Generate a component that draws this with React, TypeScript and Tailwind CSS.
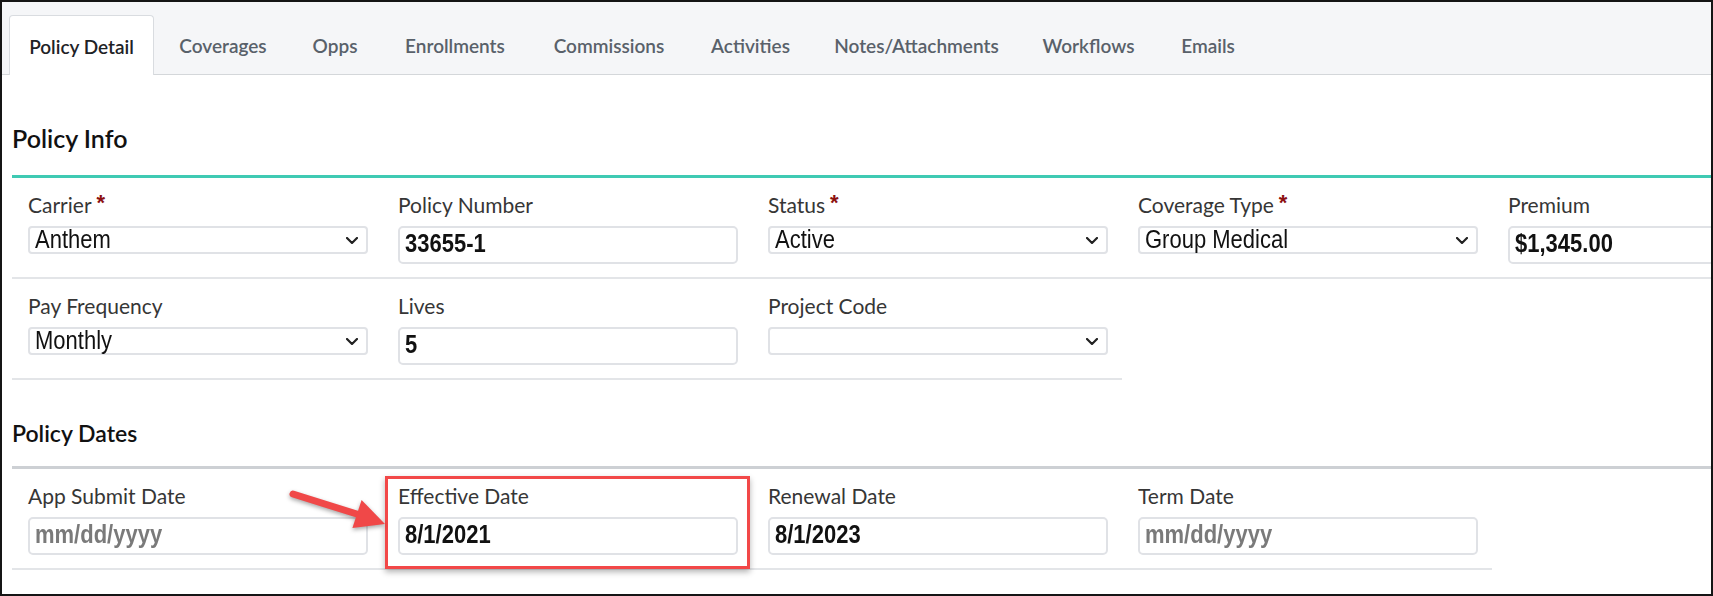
import React from "react";

type Tab = { label: string; cls: string; active?: boolean };

const tabs: Tab[] = [
  { label: "Policy Detail", cls: "w-[145px]", active: true },
  { label: "Coverages", cls: "w-[128px]" },
  { label: "Opps", cls: "w-[86px]" },
  { label: "Enrollments", cls: "w-[144px]" },
  { label: "Commissions", cls: "w-[154px]" },
  { label: "Activities", cls: "w-[119px]" },
  { label: "Notes/Attachments", cls: "w-[203px]" },
  { label: "Workflows", cls: "w-[131px]" },
  { label: "Emails", cls: "w-[98px]" },
];

type F = {
  label: string;
  req?: boolean;
  kind: "select" | "input";
  value?: string;
  placeholder?: string;
};

const row1: F[] = [
  { label: "Carrier", req: true, kind: "select", value: "Anthem" },
  { label: "Policy Number", kind: "input", value: "33655-1" },
  { label: "Status", req: true, kind: "select", value: "Active" },
  { label: "Coverage Type", req: true, kind: "select", value: "Group Medical" },
  { label: "Premium", kind: "input", value: "$1,345.00" },
];

const row2: F[] = [
  { label: "Pay Frequency", kind: "select", value: "Monthly" },
  { label: "Lives", kind: "input", value: "5" },
  { label: "Project Code", kind: "select", value: "" },
];

const row3: F[] = [
  { label: "App Submit Date", kind: "input", placeholder: "mm/dd/yyyy" },
  { label: "Effective Date", kind: "input", value: "8/1/2021" },
  { label: "Renewal Date", kind: "input", value: "8/1/2023" },
  { label: "Term Date", kind: "input", placeholder: "mm/dd/yyyy" },
];

function Chevron() {
  return (
    <svg viewBox="0 0 12 7" className="w-[12px] h-[7px] shrink-0" fill="none">
      <polyline
        points="1,1 6,6 11,1"
        stroke="#222"
        strokeWidth="2.2"
        strokeLinecap="round"
        strokeLinejoin="round"
      />
    </svg>
  );
}

function Field({ f }: { f: F }) {
  return (
    <div className="w-[370px] shrink-0 pl-4 pr-[14px] pt-[14px] pb-[13px]">
      <div className="h-[26px] text-[21px] leading-[26px] text-[#363636] whitespace-nowrap">
        {f.label}
        {f.req && (
          <span className="ml-[5px] relative -top-[3px] text-[#8c1010] font-bold font-['Liberation_Sans',Arial,sans-serif] text-[22px]">
            *
          </span>
        )}
      </div>
      <div className="mt-[8px] h-[38px] font-['Liberation_Sans',Arial,sans-serif]">
        {f.kind === "select" ? (
          <div className="h-[28px] w-[340px] flex items-center justify-between pl-[5px] pr-[8px] border-2 border-[#e0e2e6] rounded-[4px] bg-white">
            <span className="inline-block scale-y-[1.14] text-[22px] leading-none text-[#111] whitespace-nowrap">
              {f.value}
            </span>
            <Chevron />
          </div>
        ) : (
          <div className="h-[38px] w-[340px] flex items-center pl-[5px] pb-[2px] border-2 border-[#e0e2e6] rounded-[5px] bg-white">
            {f.value ? (
              <span className="inline-block scale-y-[1.14] text-[22px] leading-none font-bold text-[#111] whitespace-nowrap">
                {f.value}
              </span>
            ) : (
              <span className="inline-block scale-y-[1.14] text-[22px] leading-none font-bold text-[#7a7a7a] whitespace-nowrap">
                {f.placeholder}
              </span>
            )}
          </div>
        )}
      </div>
    </div>
  );
}

function Row({ fields }: { fields: F[] }) {
  return (
    <div className="flex w-max border-b-2 border-[#e3e5e8]">
      {fields.map((f) => (
        <Field key={f.label} f={f} />
      ))}
    </div>
  );
}

export default function App() {
  return (
    <div className="relative w-[1713px] h-[596px] overflow-hidden border-2 border-[#151515] bg-white font-['Lato',sans-serif]">
      {/* Tab bar */}
      <div className="flex items-end gap-[5px] h-[73px] pl-[7px] bg-[#f5f6f8] border-b border-[#d4d7da]">
        {tabs.map((t) =>
          t.active ? (
            <div
              key={t.label}
              className={`${t.cls} h-[60px] -mb-px flex items-center justify-center pt-[1px] bg-white border border-b-0 border-[#d9dce0] rounded-t-[4px] text-[19px] leading-none font-semibold text-[#1e2226] whitespace-nowrap`}
            >
              {t.label}
            </div>
          ) : (
            <div
              key={t.label}
              className={`${t.cls} h-[59px] flex items-center justify-center pt-[2px] text-[19px] leading-none font-semibold text-[#59616a] whitespace-nowrap`}
            >
              {t.label}
            </div>
          )
        )}
      </div>

      {/* Content */}
      <div className="pl-[10px]">
        <div className="pt-[48px] pb-[22px] border-b-[3px] border-[#3fcab3]">
          <h2 className="text-[25px] leading-[30px] font-semibold text-[#111]">Policy Info</h2>
        </div>
        <Row fields={row1} />
        <Row fields={row2} />
        <div className="pt-[39px] pb-[19px] border-b-[3px] border-[#cdd0d4]">
          <h3 className="text-[23px] leading-[28px] font-semibold text-[#111]">Policy Dates</h3>
        </div>
        <Row fields={row3} />
      </div>

      {/* Highlight box */}
      <div className="absolute left-[383px] top-[474px] w-[365px] h-[93px] border-[3px] border-[#f24848] shadow-[0_3px_6px_rgba(0,0,0,0.3)]" />

      {/* Arrow */}
      <svg
        className="absolute left-[278px] top-[483px] w-[115px] h-[55px] drop-shadow-[0_2px_2px_rgba(0,0,0,0.35)]"
        viewBox="280 485 115 55"
      >
        <line x1="293" y1="494" x2="360" y2="515" stroke="#f04848" strokeWidth="7" strokeLinecap="round" />
        <polygon points="361.6,500 385,524 352.4,528" fill="#f04848" />
      </svg>
    </div>
  );
}
